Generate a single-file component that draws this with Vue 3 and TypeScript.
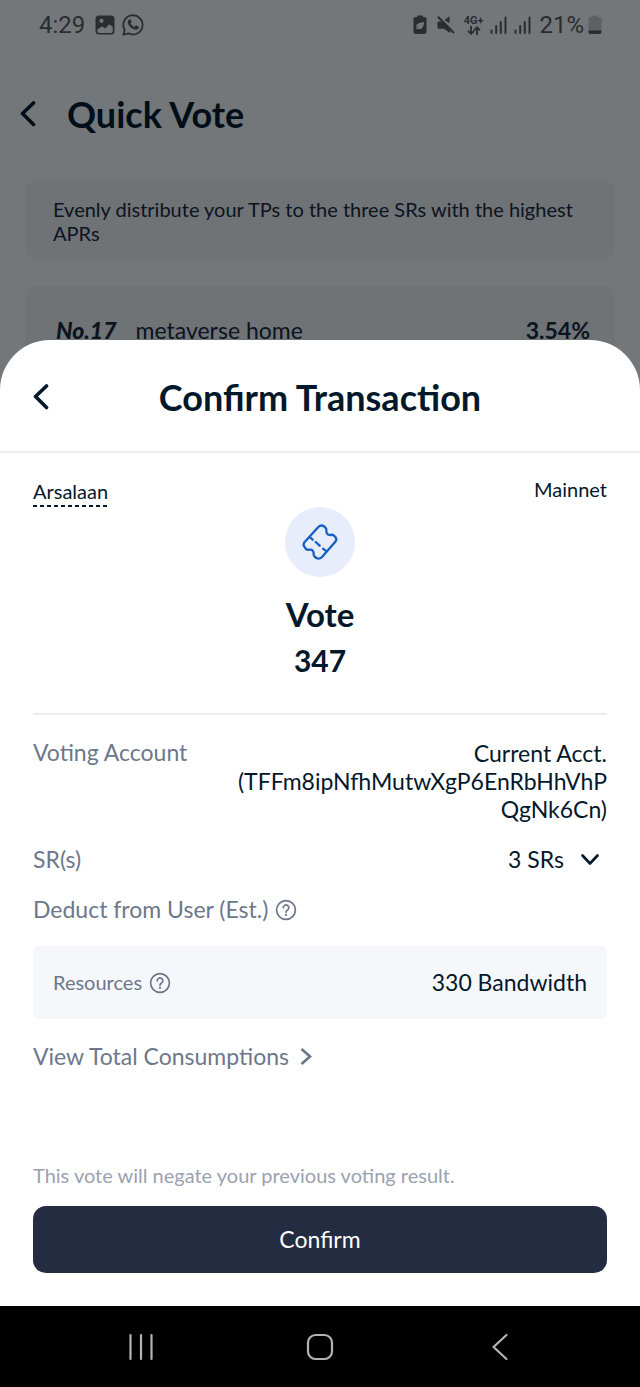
<script setup lang="ts">
interface Candidate {
  rank: string
  name: string
  apr: string
}

const candidates: Candidate[] = [{ rank: 'No.17', name: 'metaverse home', apr: '3.54%' }]
const account = 'TFFm8ipNfhMutwXgP6EnRbHhVhPQgNk6Cn'
</script>

<template>
  <div class="device">
    <div class="stage">
      <div class="page">
        <div class="status">
          <span class="clock">4:29</span>
          <svg class="photo" width="20" height="20" viewBox="0 0 20 20" aria-hidden="true">
            <path fill-rule="evenodd" fill="currentColor" d="M4 0.5h12a3.5 3.5 0 0 1 3.500 3.500v12a3.500 3.500 0 0 1-3.500 3.500H4A3.500 3.500 0 0 1 .5 16V4A3.500 3.500 0 0 1 4 .5zM2.300 14.500v1.700a1.800 1.800 0 0 0 1.800 1.800h11.800a1.800 1.800 0 0 0 1.800-1.800V12l-3.200-2.800-4.500 4.300-2.800-2.200zM6.500 3.800a2.100 2.100 0 1 0 0 4.200 2.100 2.100 0 0 0 0-4.200z" />
          </svg>
          <svg class="chat" width="22" height="22" viewBox="0 0 22 22" aria-hidden="true">
            <path fill="none" stroke="currentColor" stroke-width="1.800" stroke-linejoin="round" d="M1.300 20.700l1.400-5A9.600 9.600 0 1 1 6.400 19.300z" />
            <path fill="currentColor" d="M7.300 5.500c.6-.3 1.200-.2 1.500.4l.8 1.900c.1.400 0 .7-.9 1.700.8 1.600 2 2.700 3.700 3.500l1.200-1.400c.3-.3.600-.3.900-.1l2 1c.4.200.4.500.3.900-.4 1.600-1.900 2.400-3.400 2.200-3.800-.6-7.400-4.100-7.700-7.200-.1-1.200.6-2.400 1.600-2.900z" />
          </svg>
          <span class="spacer"></span>
          <svg width="14" height="20" viewBox="0 0 14 20" aria-hidden="true">
            <path fill-rule="evenodd" fill="currentColor" d="M4 1.500Q4 .5 5 .5h4q1 0 1 1V2h1.500A2 2 0 0 1 13.500 4v13a2 2 0 0 1-2 2h-9a2 2 0 0 1-2-2V4a2 2 0 0 1 2-2H4zM3 14.500l1-.8c3 1.300 7 .3 7-6.700-4 .8-8.500 1.500-7.700 5.500L7 10.300l-4 3.200z" />
          </svg>
          <svg class="mute" width="20" height="20" viewBox="0 0 20 20" aria-hidden="true">
            <path fill="currentColor" d="M13.500 1v7L8.500 5.300zM2.500 6.500h4l7.500 7.500v4L8 13.800H3a1.500 1.500 0 0 1-1.500-1.500V7.500a1 1 0 0 1 1-1z" />
            <path fill="none" stroke="currentColor" stroke-width="2" d="M2 1.800L18 18" />
          </svg>
          <span class="network">
            <span>4G+</span>
            <svg width="14" height="9" viewBox="0 0 14 9" aria-hidden="true">
              <path fill="none" stroke="currentColor" stroke-width="1.800" d="M4 0v7.500M1 4.800l3 3 3-3M10 9V1.500M7 4.300l3-3 3 3" />
            </svg>
          </span>
          <svg v-for="n in 2" :key="n" class="signal" width="17" height="18" viewBox="0 0 17 18" aria-hidden="true">
            <path fill="none" stroke="currentColor" stroke-width="2" stroke-linecap="round" d="M1.500 14.500V17M6.200 10v7M10.800 6v11M15.500 1.500V17" />
          </svg>
          <span class="level">21%</span>
          <svg width="14" height="20" viewBox="0 0 14 20" aria-hidden="true">
            <path fill="currentColor" fill-opacity=".3" d="M4 1.500Q4 .5 5 .5h4q1 0 1 1V2h1.500A2 2 0 0 1 13.500 4v12H.5V4a2 2 0 0 1 2-2H4z" />
            <path fill="currentColor" d="M.5 15.500h13V17a2 2 0 0 1-2 2h-9a2 2 0 0 1-2-2z" />
          </svg>
        </div>

        <header class="page-head">
          <button type="button" class="icon-btn" aria-label="Back">
            <svg width="16" height="26" viewBox="0 0 16 26" aria-hidden="true">
              <path fill="none" stroke="currentColor" stroke-width="3.600" stroke-linecap="round" stroke-linejoin="round" d="M13.500 2L2.500 12.500l11 11" />
            </svg>
          </button>
          <h1>Quick Vote</h1>
        </header>

        <main class="cards">
          <p class="card tip">Evenly distribute your TPs to the three SRs with the highest APRs</p>
          <div class="card list">
            <div v-for="c in candidates" :key="c.rank" class="candidate">
              <span class="rank">{{ c.rank }}</span>
              <span>{{ c.name }}</span>
              <span class="apr">{{ c.apr }}</span>
            </div>
          </div>
        </main>
      </div>

      <div class="scrim">
        <section class="sheet" role="dialog" aria-labelledby="sheet-title">
          <header class="sheet-head">
            <button type="button" class="icon-btn" aria-label="Back">
              <svg width="16" height="26" viewBox="0 0 16 26" aria-hidden="true">
                <path fill="none" stroke="currentColor" stroke-width="3.600" stroke-linecap="round" stroke-linejoin="round" d="M13.500 2L2.500 12.500l11 11" />
              </svg>
            </button>
            <h2 id="sheet-title">Confirm Transaction</h2>
          </header>

          <div class="body">
            <div class="who">
              <button type="button" class="wallet">Arsalaan</button>
              <span>Mainnet</span>
            </div>

            <div class="summary">
              <span class="badge">
                <svg width="36" height="36" viewBox="0 0 108 108" aria-hidden="true">
                  <g fill="none" stroke="#1a5fc4" stroke-width="7" stroke-linecap="round" stroke-linejoin="round">
                    <path d="M49 9Q57 1 66 7L70 11Q74 15 73 21Q73 34 86 33Q92 31 96 35L100 39Q106 46 100 53L60 99Q52 107 43 102L38 98Q34 93 35 88Q34 76 22 77Q16 79 11 74L7 68Q2 61 8 54Z" />
                    <path d="M25 41l7 6M41 54l12 11M63 74l8 6" />
                  </g>
                </svg>
              </span>
              <strong class="action">Vote</strong>
              <strong class="amount">347</strong>
            </div>

            <dl class="details">
              <div class="row">
                <dt>Voting Account</dt>
                <dd class="account">Current Acct. ({{ account }})</dd>
              </div>
              <div class="row">
                <dt>SR(s)</dt>
                <dd>
                  <button type="button" class="expand">
                    3 SRs
                    <svg width="20" height="14" viewBox="0 0 20 14" aria-hidden="true">
                      <path fill="none" stroke="currentColor" stroke-width="2.600" stroke-linecap="round" stroke-linejoin="round" d="M2.500 2.500l7.500 8L17.500 2.500" />
                    </svg>
                  </button>
                </dd>
              </div>
              <div class="row">
                <dt class="with-help">
                  Deduct from User (Est.)
                  <button type="button" class="help" aria-label="About deductions">
                    <svg width="22" height="22" viewBox="0 0 22 22" aria-hidden="true">
                      <g fill="none" stroke="currentColor" stroke-width="1.700" stroke-linecap="round">
                        <circle cx="11" cy="11" r="9.400" />
                        <path d="M8.200 8.800a2.800 2.800 0 1 1 4.300 2.300Q11 12 11 13.200" />
                      </g>
                      <circle cx="11" cy="15.900" r="1.100" fill="currentColor" />
                    </svg>
                  </button>
                </dt>
              </div>
              <div class="row panel">
                <dt class="with-help">
                  Resources
                  <button type="button" class="help" aria-label="About resources">
                    <svg width="22" height="22" viewBox="0 0 22 22" aria-hidden="true">
                      <g fill="none" stroke="currentColor" stroke-width="1.700" stroke-linecap="round">
                        <circle cx="11" cy="11" r="9.400" />
                        <path d="M8.200 8.800a2.800 2.800 0 1 1 4.300 2.300Q11 12 11 13.200" />
                      </g>
                      <circle cx="11" cy="15.900" r="1.100" fill="currentColor" />
                    </svg>
                  </button>
                </dt>
                <dd>330 Bandwidth</dd>
              </div>
            </dl>

            <a class="more" href="#">
              View Total Consumptions
              <svg width="12" height="18" viewBox="0 0 12 18" aria-hidden="true">
                <path fill="none" stroke="currentColor" stroke-width="2.700" d="M1.500 1L10 8.500l-8.500 7.500" />
              </svg>
            </a>

            <p class="warning">This vote will negate your previous voting result.</p>
            <button type="button" class="confirm">Confirm</button>
          </div>
        </section>
      </div>
    </div>

    <nav class="system" aria-label="System navigation">
      <button type="button" aria-label="Recent apps">
        <svg width="28" height="28" viewBox="0 0 28 28" aria-hidden="true">
          <path fill="none" stroke="currentColor" stroke-width="2.200" stroke-linecap="round" d="M3.500 2v24M14 2v24M24.500 2v24" />
        </svg>
      </button>
      <button type="button" aria-label="Home">
        <svg width="28" height="28" viewBox="0 0 28 28" aria-hidden="true">
          <rect x="2" y="2" width="24" height="24" rx="7.500" fill="none" stroke="currentColor" stroke-width="2.200" />
        </svg>
      </button>
      <button type="button" aria-label="Back">
        <svg width="28" height="28" viewBox="0 0 28 28" aria-hidden="true">
          <path fill="none" stroke="currentColor" stroke-width="2.200" stroke-linecap="round" stroke-linejoin="round" d="M21.500 2L8.500 14l13 12" />
        </svg>
      </button>
    </nav>
  </div>
</template>

<style>
body {
  margin: 0;
}
</style>

<style scoped>
.device {
  display: flex;
  flex-direction: column;
  min-height: 100vh;
  color: #04182b;
  font-family: Lato, 'Liberation Sans', sans-serif;
  font-size: 23px;
  line-height: 27px;
}

h1,
h2,
p,
dl,
dd {
  margin: 0;
}

h1,
h2 {
  font-size: 36px;
  line-height: 44px;
  font-weight: 700;
}

button {
  display: flex;
  align-items: center;
  padding: 0;
  border: 0;
  background: none;
  color: inherit;
  font: inherit;
  cursor: pointer;
}

svg {
  display: block;
  flex: none;
}

.stage {
  display: grid;
  flex: 1;
}

.page,
.scrim {
  grid-area: 1 / 1;
  min-width: 0;
}

.page {
  background: #fff;
}

.scrim {
  display: flex;
  flex-direction: column;
  justify-content: flex-end;
  z-index: 1;
  background: rgba(0, 7, 12, 0.55);
}

.status {
  display: flex;
  align-items: center;
  padding: 11px 38px 0 39px;
  color: #5c5c5c;
  font-family: Roboto, sans-serif;
  font-size: 24px;
  line-height: 28px;
}

.photo {
  margin-left: 10px;
}

.chat {
  margin-left: 7px;
}

.spacer {
  flex: 1;
}

.mute {
  margin: 0 8px 0 9px;
}

.network {
  display: flex;
  flex-direction: column;
  align-items: center;
  font-size: 11px;
  line-height: 11px;
  font-weight: 700;
}

.signal {
  margin-left: 7px;
}

.level {
  margin: 0 4px 0 8px;
}

.page-head {
  display: flex;
  align-items: center;
  gap: 31px;
  padding: 53px 20px 0;
}

.cards {
  display: flex;
  flex-direction: column;
  gap: 26px;
  padding: 44px 25px;
}

.card {
  border-radius: 12px;
  background: #f6f7f7;
}

.tip {
  padding: 17px 28px 15px;
  color: #1c2438;
  font-size: 20px;
  line-height: 24px;
}

.list {
  padding: 31px 25px 30px 31px;
  color: #1c2438;
}

.candidate {
  display: flex;
  gap: 19px;
}

.rank {
  font-weight: 900;
  font-style: italic;
}

.apr {
  margin-left: auto;
  font-weight: 700;
}

.sheet {
  border-radius: 50px 50px 0 0;
  background: #fff;
}

.sheet-head {
  display: grid;
  grid-template-columns: 16px 1fr 16px;
  align-items: center;
  padding: 35px 33px 32px;
  border-bottom: 2px solid #ededf0;
  text-align: center;
}

.body {
  display: flex;
  flex-direction: column;
  padding: 22px 33px 33px;
}

.who {
  display: flex;
  justify-content: space-between;
  align-items: flex-start;
  font-size: 20px;
  line-height: 28px;
}

.wallet {
  padding: 2px 0;
  background: repeating-linear-gradient(90deg, #04182b 0 4px, transparent 4px 7px) left bottom / 100% 2px no-repeat;
}

.summary {
  display: flex;
  flex-direction: column;
  align-items: center;
  padding-bottom: 35px;
  border-bottom: 2px solid #ededf0;
}

.badge {
  display: grid;
  place-items: center;
  width: 70px;
  height: 70px;
  border-radius: 50%;
  background: #e7edfa;
}

.action {
  margin-top: 17px;
  font-size: 33px;
  line-height: 40px;
}

.amount {
  margin-top: 8px;
  font-size: 30px;
  line-height: 36px;
}

.details {
  display: flex;
  flex-direction: column;
  gap: 23px;
  padding-top: 24px;
}

.row {
  display: flex;
  justify-content: space-between;
}

dt,
.more {
  color: #6d778b;
}

.account {
  width: 65%;
  line-height: 28px;
  text-align: right;
  overflow-wrap: anywhere;
}

.expand {
  gap: 16px;
  padding-right: 7px;
}

.with-help {
  display: flex;
  align-items: center;
  gap: 7px;
}

.panel {
  padding: 23px 20px;
  border-radius: 6px;
  background: #f6f7fa;
}

.panel dt {
  font-size: 20px;
}

.more {
  display: flex;
  align-items: center;
  align-self: flex-start;
  gap: 11px;
  margin-top: 24px;
  text-decoration: none;
}

.warning {
  margin-top: 92px;
  color: #9aa2b1;
  font-size: 20px;
}

.confirm {
  justify-content: center;
  margin-top: 17px;
  padding: 20px;
  border-radius: 13px;
  background: #232c41;
  color: #fff;
}

.system {
  display: flex;
  justify-content: space-around;
  align-items: center;
  height: 81px;
  padding: 0 52px;
  background: #000;
  color: #b4b4b4;
}
</style>
